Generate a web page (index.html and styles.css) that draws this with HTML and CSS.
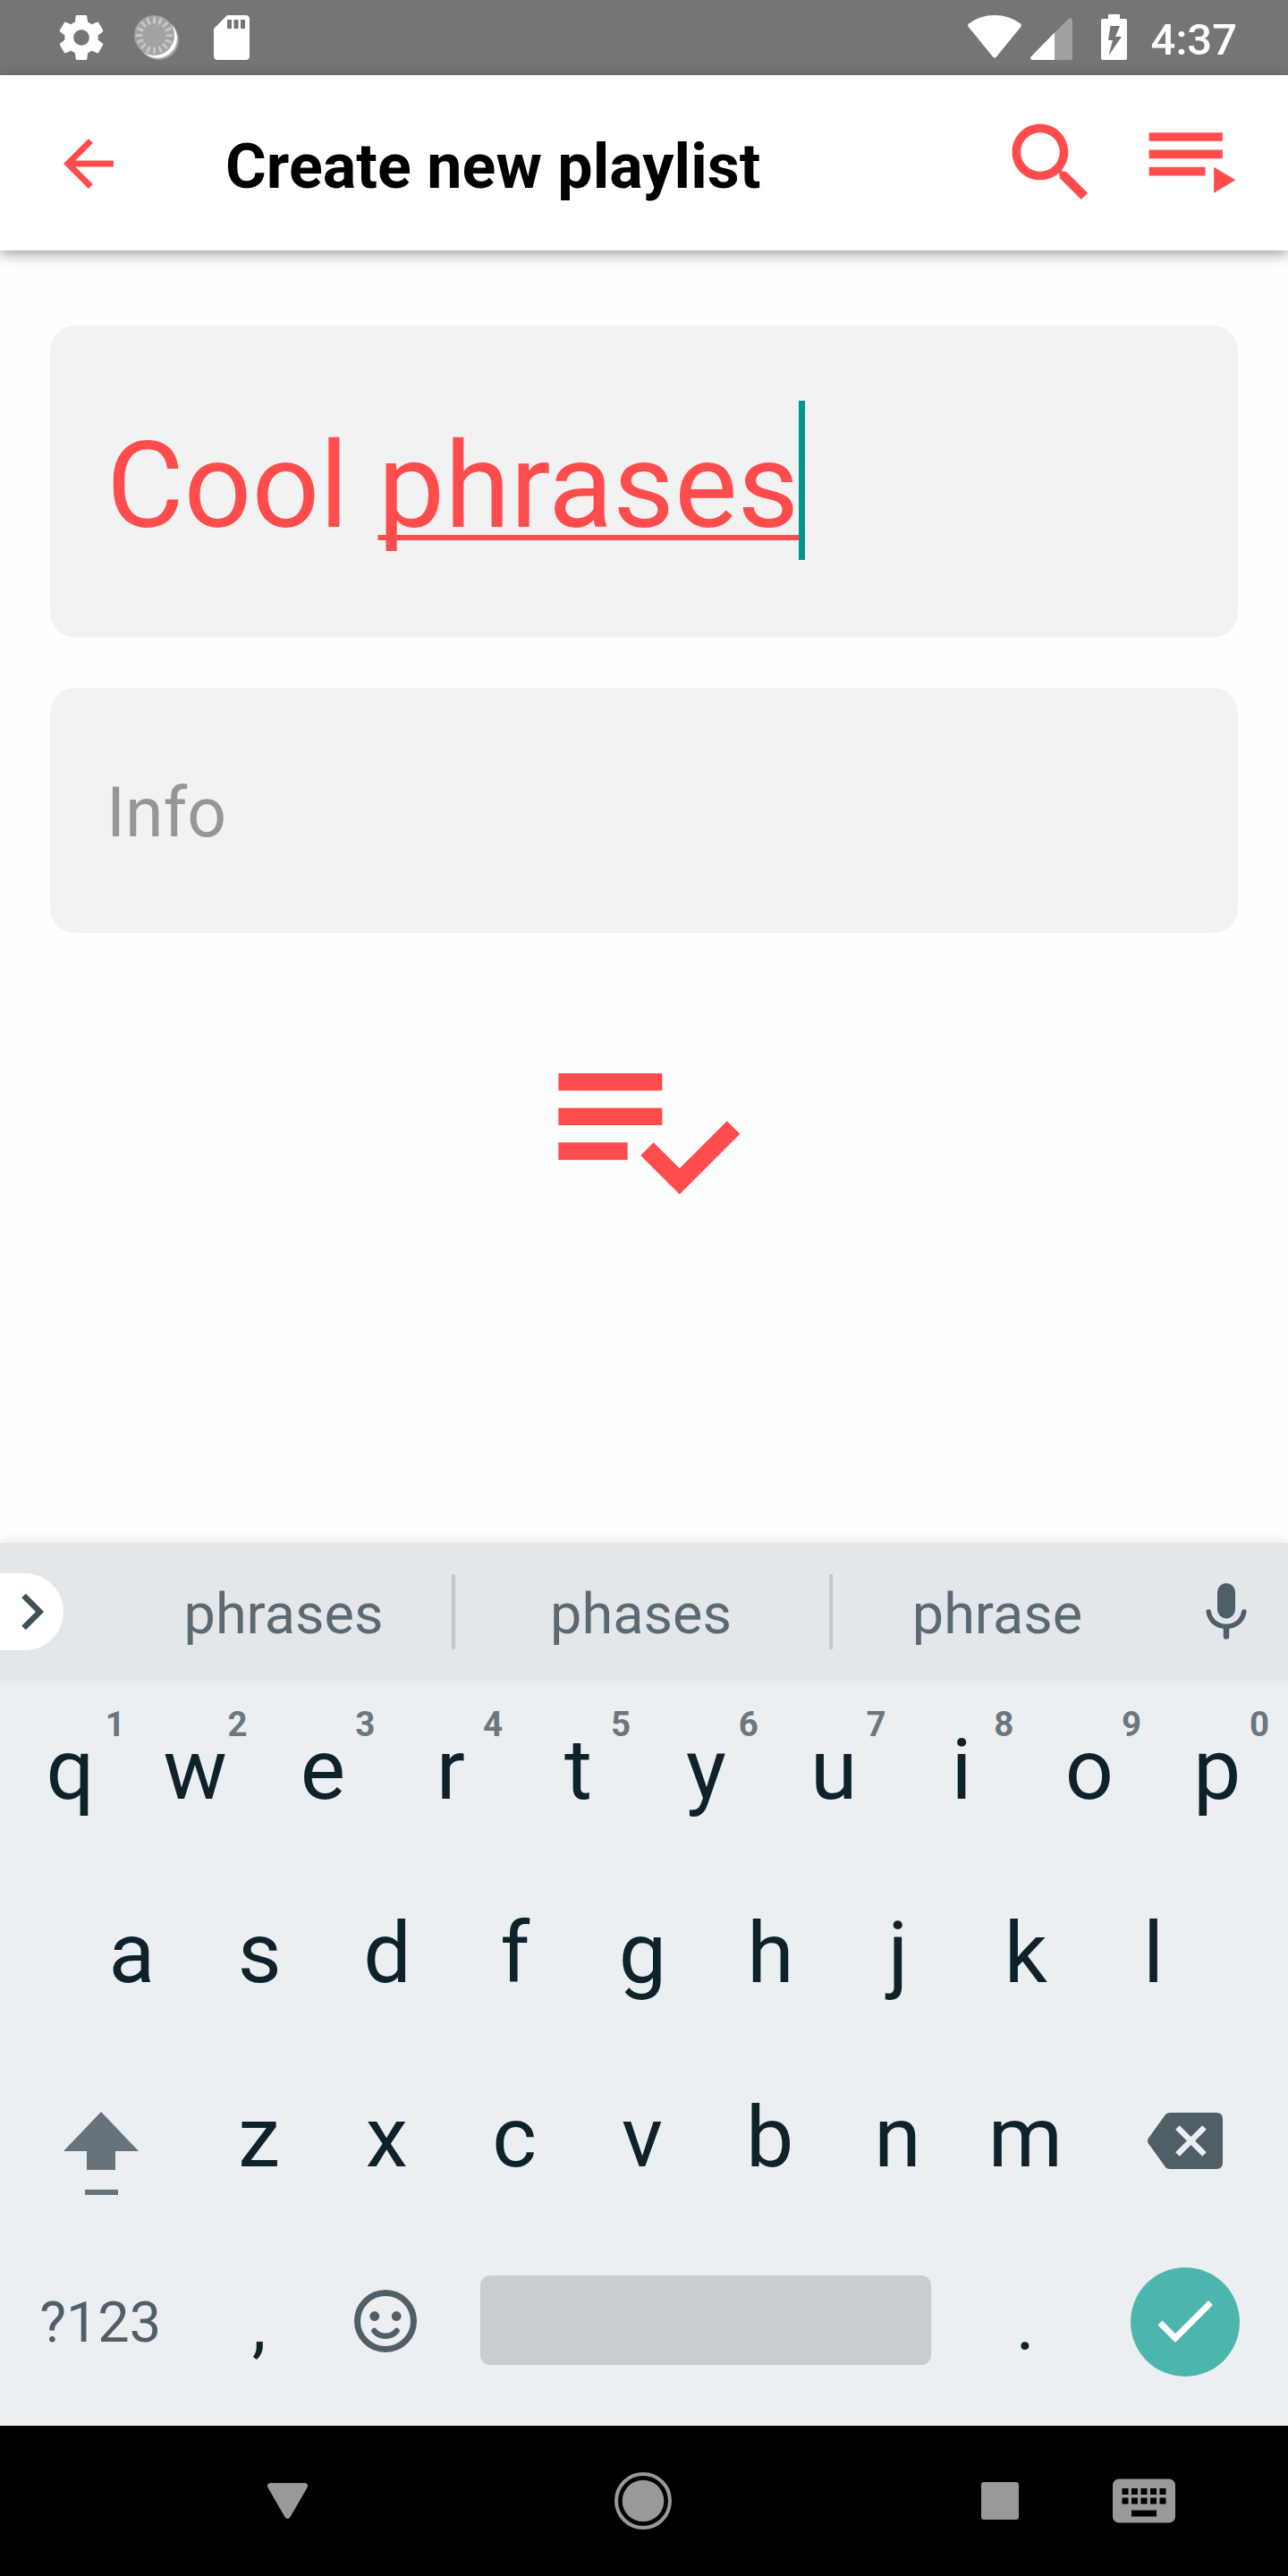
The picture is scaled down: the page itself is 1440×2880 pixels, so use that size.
FILE: index.html
```html
<!DOCTYPE html>
<html lang="en">
<head>
<meta charset="utf-8">
<title>Create new playlist</title>
<link rel="stylesheet" href="styles.css">
</head>
<body>
<div class="screen">
  <div class="status-bar">
    <div class="status-icons">
      <svg class="status-gear" width="60" height="60" viewBox="0 0 24 24" fill="#fff"><path d="M19.43 12.98c.04-.32.07-.64.07-.98s-.03-.66-.07-.98l2.11-1.65c.19-.15.24-.42.12-.64l-2-3.46c-.12-.22-.39-.3-.61-.22l-2.49 1c-.52-.4-1.08-.73-1.69-.98l-.38-2.65C14.46 2.18 14.25 2 14 2h-4c-.25 0-.46.18-.49.42l-.38 2.65c-.61.25-1.17.59-1.69.98l-2.49-1c-.23-.09-.49 0-.61.22l-2 3.46c-.13.22-.07.49.12.64l2.11 1.65c-.04.32-.07.65-.07.98s.03.66.07.98l-2.11 1.65c-.19.15-.24.42-.12.64l2 3.46c.12.22.39.3.61.22l2.49-1c.52.4 1.08.73 1.69.98l.38 2.65c.03.24.24.42.49.42h4c.25 0 .46-.18.49-.42l.38-2.65c.61-.25 1.17-.59 1.69-.98l2.49 1c.23.09.49 0 .61-.22l2-3.46c.12-.22.07-.49-.12-.64l-2.11-1.65zM12 15.5c-1.93 0-3.5-1.57-3.5-3.5s1.57-3.5 3.5-3.5 3.5 1.57 3.5 3.5-1.57 3.5-3.5 3.5z"/></svg>
      <svg class="status-sync" width="50" height="50" viewBox="0 0 50 50">
        <circle cx="27.5" cy="27.5" r="22.5" fill="#a3a3a3"/>
        <circle cx="26" cy="26" r="22" fill="#fff"/>
        <circle cx="22.5" cy="22.5" r="22.5" fill="#a3a3a3"/>
        <g stroke="#c6c6c6" stroke-width="3" stroke-linecap="round">
          <path id="tick" d="M22.5 3v5M22.5 37v5M3 22.5h5M37 22.5h5"/>
          <use href="#tick" transform="rotate(22.5 22.5 22.5)"/>
          <use href="#tick" transform="rotate(45 22.5 22.5)"/>
          <use href="#tick" transform="rotate(67.5 22.5 22.5)"/>
        </g>
      </svg>
      <svg width="40" height="50" viewBox="0 0 40 50" fill="#fff" fill-rule="evenodd"><path d="M15 0H35.500Q40 0 40 4.500V45.500Q40 50 35.500 50H4.500Q0 50 0 45.500V15ZM15 5V15H20V5ZM22.500 5V15H27.500V5ZM30 5V15H35V5Z"/></svg>
    </div>
    <div class="status-right">
      <svg width="60" height="48" viewBox="0 0 60 48" fill="#fff"><path d="M1 9.500Q13 0 30 0T59 9.500Q60.600 11 59.300 13L32 46.500Q30 48.800 28 46.500L.7 13Q-.6 11 1 9.500Z"/></svg>
      <svg class="status-cell" width="47" height="47" viewBox="0 0 47 47"><path d="M43 .8Q47-1 47 3V45Q47 47 45 47H27V16.500Z" fill="#a0a0a0"/><path d="M27 16.500V47H2Q-1 46 .5 43.500Z" fill="#fff"/></svg>
      <svg class="status-battery" width="29" height="51" viewBox="0 0 29 51" fill="#fff" fill-rule="evenodd"><path d="M8 0H21V5H27Q29 5 29 7V49Q29 51 27 51H2Q0 51 0 49V7Q0 5 2 5H8ZM10.500 13 8 29H13L8.500 46 23 25H16L21 13Z"/></svg>
      <span class="clock">4:37</span>
    </div>
  </div>

  <div class="app-bar">
    <svg class="back-icon" width="84" height="84" viewBox="0 0 24 24"><path d="M20 11H7.800l5.600-5.600L12 4l-8 8 8 8 1.400-1.400L7.800 13H20v-2z"/></svg>
    <h1 class="title">Create new playlist</h1>
    <svg class="bar-icon" viewBox="0 0 24 24"><path d="M15.500 14h-.79l-.28-.27C15.410 12.590 16 11.110 16 9.500 16 5.910 13.090 3 9.500 3S3 5.910 3 9.500 5.910 16 9.500 16c1.610 0 3.090-.59 4.230-1.570l.27.28v.79l5 4.990L20.490 19l-4.990-5zm-6 0C7.010 14 5 11.990 5 9.500S7.010 5 9.500 5 14 7.010 14 9.500 11.990 14 9.500 14z"/></svg>
    <svg class="bar-icon playlist-icon" viewBox="0 0 24 24"><path d="M19 9H2v2h17V9zm0-4H2v2h17V5zM2 15h13v-2H2v2zm15-2v6l5-3-5-3z"/></svg>
  </div>

  <div class="content">
    <div class="field name-field"><div class="name-value"><span class="cursor"></span><span class="name-text">Cool <span class="composing">phrases</span></span></div></div>
    <div class="field info-field">Info</div>
    <svg class="save-icon" width="232" height="232" viewBox="0 0 24 24"><path d="M14 10H2v2h12v-2zm0-4H2v2h12V6zM2 16h8v-2H2v2zm19.500-4.500L23 13l-6.990 7-4.510-4.500L13 14l3.010 3 5.490-5.500z"/></svg>
  </div>

  <div class="keyboard">
    <div class="suggestions">
      <div class="chip"><svg width="26" height="42" viewBox="0 0 26 42" fill="none" stroke="#3f5059" stroke-width="6.500"><path d="M2.500 3 20.500 21 2.500 39"/></svg></div>
      <div class="suggestion first">phrases</div>
      <div class="divider"></div>
      <div class="suggestion">phases</div>
      <div class="divider"></div>
      <div class="suggestion last">phrase</div>
      <div class="mic"><svg width="46" height="63" viewBox="0 0 46 63" fill="none" stroke="#4f5f67" stroke-width="5.500" stroke-linecap="round"><rect x="13" y="0" width="20" height="39.500" rx="10" fill="#4f5f67" stroke="none"/><path d="M3.200 32C5 42.500 13 48.500 23 48.500S41 42.500 42.800 32"/><path d="M23 49V59.500" stroke-width="6.500"/></svg></div>
    </div>
    <div class="row row-top">
      <div class="key key-first">q<span class="hint">1</span></div><div class="key">w<span class="hint">2</span></div><div class="key">e<span class="hint">3</span></div><div class="key">r<span class="hint">4</span></div><div class="key">t<span class="hint">5</span></div><div class="key">y<span class="hint">6</span></div><div class="key">u<span class="hint">7</span></div><div class="key">i<span class="hint">8</span></div><div class="key">o<span class="hint">9</span></div><div class="key">p<span class="hint">0</span></div>
    </div>
    <div class="row row-home">
      <div class="key">a</div><div class="key">s</div><div class="key">d</div><div class="key">f</div><div class="key">g</div><div class="key">h</div><div class="key">j</div><div class="key">k</div><div class="key">l</div>
    </div>
    <div class="row">
      <div class="key wide"><svg class="shift-icon" width="84" height="93" viewBox="0 0 84 93" fill="#67737b"><path d="M42 0 84 44H58V65H26V44H0ZM24 87H61V93H24Z"/></svg></div>
      <div class="key">z</div><div class="key">x</div><div class="key">c</div><div class="key">v</div><div class="key">b</div><div class="key">n</div><div class="key">m</div>
      <div class="key wide"><svg class="delete-icon" width="84" height="63" viewBox="0 0 84 63"><path d="M25 0H77Q84 0 84 7V56Q84 63 77 63H25Q21 63 19 59.500L1 34.500Q-1 31.500 1 28.500L19 3.500Q21 0 25 0Z" fill="#505e66"/><path d="M33.500 16.500 63.500 46.500M63.500 16.500 33.500 46.500" stroke="#ebeff2" stroke-width="6.500"/></svg></div>
    </div>
    <div class="row">
      <div class="key wide symbols">?123</div>
      <div class="key punct">,</div>
      <div class="key"><svg class="emoji-icon" width="70" height="70" viewBox="0 0 70 70" fill="none" stroke="#505f67"><circle cx="35" cy="35" r="31.500" stroke-width="7"/><g fill="#505f67" stroke="none"><circle cx="22.800" cy="29.500" r="5.400"/><circle cx="47.200" cy="29.500" r="5.400"/></g><path d="M22.500 46Q27 51.700 35 51.700T47.500 46" stroke-width="6.500" stroke-linecap="round"/></svg></div>
      <div class="space"></div>
      <div class="key punct">.</div>
      <div class="key wide"><div class="enter"><svg width="62" height="48" viewBox="0 0 62 48" fill="none" stroke="#fff" stroke-width="7"><path d="M3 25 20 42 59.500 2.500"/></svg></div></div>
    </div>
  </div>

  <div class="nav-bar">
    <svg class="nav-back" width="45" height="40" viewBox="0 0 45 40"><path d="M3 0H42Q46.500 1 44.300 5.500L25.500 38Q22.500 42 19.500 38L.7 5.500Q-1.500 1 3 0Z"/></svg>
    <svg class="nav-home" width="64" height="64" viewBox="0 0 64 64"><circle cx="32" cy="32" r="23.300"/><circle cx="32" cy="32" r="30" fill="none" stroke="#999" stroke-width="4"/></svg>
    <div class="nav-recent"></div>
    <svg class="nav-keyboard" width="84" height="84" viewBox="0 0 24 24"><path d="M20 5H4c-1.100 0-1.990.9-1.990 2L2 17c0 1.100.9 2 2 2h16c1.100 0 2-.9 2-2V7c0-1.100-.9-2-2-2zm-9 3h2v2h-2V8zm0 3h2v2h-2v-2zM8 8h2v2H8V8zm0 3h2v2H8v-2zm-1 2H5v-2h2v2zm0-3H5V8h2v2zm9 7H8v-2h8v2zm0-4h-2v-2h2v2zm0-3h-2V8h2v2zm3 3h-2v-2h2v2zm0-3h-2V8h2v2z"/></svg>
  </div>
</div>
</body>
</html>
```

FILE: styles.css
```css
* {
  box-sizing: border-box;
}

body {
  margin: 0;
  font-family: Roboto, "Liberation Sans", sans-serif;
}

svg {
  display: block;
  flex: none;
}

.screen {
  display: flex;
  flex-direction: column;
  width: 1440px;
  height: 2880px;
  overflow: hidden;
  background: #fefefe;
}

/* Status bar */
.status-bar {
  display: flex;
  justify-content: space-between;
  flex: none;
  height: 84px;
  padding: 0 57px 0 61px;
  background: #757575;
}

.status-icons,
.status-right {
  display: flex;
  align-items: center;
}

.status-sync {
  margin: 0 39px 0 29px;
}

.status-right svg {
  margin-bottom: 2px;
}

.status-right .status-cell {
  margin: 3px 32px 0 10px;
}

.status-right .status-battery {
  margin-bottom: 1px;
}

.clock {
  margin-left: 27px;
  padding-top: 5px;
  color: #fff;
  font-size: 49px;
  font-weight: 500;
  line-height: 57px;
}

/* App bar */
.app-bar {
  position: relative;
  display: flex;
  align-items: center;
  flex: none;
  height: 196px;
  padding: 0 49px 0 57px;
  background: #fff;
  box-shadow: 0 4px 14px rgba(0, 0, 0, 0.38);
  fill: #ff4c4c;
}

.back-icon {
  margin-top: 2px;
}

.title {
  flex: 1;
  margin: 0;
  padding: 8px 0 0 111px;
  color: #000;
  font-size: 70px;
  font-weight: 700;
  letter-spacing: 0.05px;
  line-height: 82px;
  white-space: nowrap;
}

.bar-icon {
  width: 116px;
  height: 116px;
}

.playlist-icon {
  margin-left: 42px;
}

/* Form */
.content {
  display: flex;
  flex-direction: column;
  flex: 1;
  align-items: center;
  padding: 84px 56px 0;
  fill: #ff4c4c;
}

.field {
  width: 100%;
  border-radius: 28px;
  background: #f2f2f2;
}

.name-field {
  height: 349px;
  padding: 84px 63px 0;
  color: #ff4c4c;
  font-size: 133px;
  line-height: 192px;
}

.name-value {
  position: relative;
  width: max-content;
}

.name-text {
  position: relative;
}

.composing {
  text-decoration: underline 6px;
  text-decoration-skip-ink: none;
  text-underline-offset: 9px;
}

.cursor {
  position: absolute;
  top: 0;
  right: -7px;
  width: 7px;
  height: 178px;
  background: #009688;
}

.info-field {
  height: 274px;
  margin-top: 56px;
  padding: 6px 63px 0;
  color: #969696;
  font-size: 77px;
  line-height: 269px;
}

.save-icon {
  margin: 99px 0 0 1px;
}

/* Keyboard */
.keyboard {
  flex: none;
  height: 987px;
  background: #ebeff2;
  box-shadow: 0 0 14px rgba(0, 0, 0, 0.12);
}

.suggestions {
  display: flex;
  align-items: center;
  height: 154px;
  background: #e3e7ea;
}

.chip {
  display: flex;
  align-items: center;
  width: 71px;
  height: 86px;
  padding-left: 24px;
  border-radius: 0 43px 43px 0;
  background: #fff;
}

.suggestion {
  flex: 1;
  padding: 5px 3px 0 0;
  color: #5b6a72;
  font-size: 63px;
  line-height: 74px;
  text-align: center;
}

.suggestion.first {
  flex: 0 0 376px;
  margin-left: 58px;
  padding-right: 0;
}

.suggestion.last {
  flex: 0 0 371px;
}

.divider {
  width: 4px;
  height: 84px;
  background: #c3c8cb;
}

.mic {
  display: flex;
  justify-content: center;
  width: 138px;
  padding-bottom: 2px;
}

.row {
  display: flex;
  align-items: center;
  height: 206px;
  padding: 0 8px 0 4px;
}

.row-top {
  height: 202px;
  padding-bottom: 3px;
}

.row-home {
  padding: 0 79px 0 76px;
}

.key {
  position: relative;
  display: flex;
  align-items: center;
  justify-content: center;
  flex: 1;
  color: #0e222b;
  font-size: 95px;
  line-height: 112px;
}

.key.wide {
  flex: 1.5;
}

.key-first {
  left: 3px;
}

.hint {
  position: absolute;
  top: -18px;
  right: 13px;
  color: #6b777e;
  font-size: 38.5px;
  font-weight: 700;
  line-height: 46px;
}

.key-first .hint {
  right: 10px;
}

.shift-icon {
  margin: 34px 0 0 4px;
}

.delete-icon {
  margin-top: 6px;
}

.emoji-icon {
  margin: 0 2px 3px 0;
}

.key.symbols {
  padding-top: 1px;
  color: #505f67;
  font-size: 63px;
  text-indent: 2px;
}

.key.punct {
  padding-top: 8px;
  font-size: 80px;
}

.space {
  width: 504px;
  height: 100px;
  margin: 0 34px 4px 33px;
  border-radius: 11px;
  background: #c9cdd0;
}

.enter {
  display: flex;
  align-items: center;
  justify-content: center;
  width: 122px;
  height: 122px;
  margin-left: 1px;
  border-radius: 50%;
  background: #4db6ac;
}

/* Navigation bar */
.nav-bar {
  display: flex;
  align-items: center;
  flex: none;
  height: 168px;
  padding-left: 299px;
  background: #000;
  fill: #999;
}

.nav-home {
  margin: 0 346px 0 343px;
}

.nav-recent {
  width: 42px;
  height: 42px;
  border-radius: 3px;
  background: #999;
}

.nav-keyboard {
  margin-left: 98px;
}
```
